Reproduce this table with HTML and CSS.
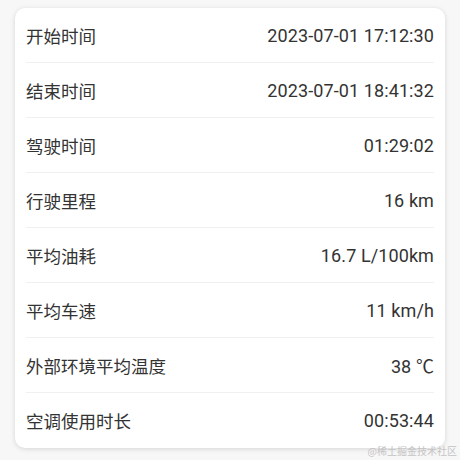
FILE: index.html
```html
<!DOCTYPE html>
<html lang="zh">
<head>
<meta charset="utf-8">
<link rel="stylesheet" href="styles.css">
</head>
<body>
<div class="card">
  <div class="row"><span class="label">开始时间</span><span class="value">2023-07-01 17:12:30</span></div>
  <div class="row"><span class="label">结束时间</span><span class="value">2023-07-01 18:41:32</span></div>
  <div class="row"><span class="label">驾驶时间</span><span class="value">01:29:02</span></div>
  <div class="row"><span class="label">行驶里程</span><span class="value">16 km</span></div>
  <div class="row"><span class="label">平均油耗</span><span class="value">16.7 L/100km</span></div>
  <div class="row"><span class="label">平均车速</span><span class="value">11 km/h</span></div>
  <div class="row"><span class="label">外部环境平均温度</span><span class="value">38 ℃</span></div>
  <div class="row"><span class="label">空调使用时长</span><span class="value">00:53:44</span></div>
</div>
<div class="watermark">@稀土掘金技术社区</div>
</body>
</html>
```
FILE: styles.css
```css
html, body {
  margin: 0;
  background: #f7f7f7;
}
body {
  padding: 8px 15px 0 15px;
  width: 460px;
  height: 460px;
  box-sizing: border-box;
  position: relative;
  font-family: Roboto, "Noto Sans CJK SC", sans-serif;
  color: #333;
}
.card {
  background: #fff;
  border-radius: 10px;
  box-shadow: 0 1px 5px rgba(0, 0, 0, 0.14);
  padding: 0 11px;
}
.row {
  height: 55px;
  box-sizing: border-box;
  display: flex;
  align-items: center;
  justify-content: space-between;
  border-bottom: 1px solid #f0f0f0;
}
.row:last-child {
  border-bottom: none;
}
.label {
  font-size: 17.5px;
}
.value {
  font-size: 18px;
  letter-spacing: 0.1px;
}
.watermark {
  position: absolute;
  right: 3px;
  bottom: 2px;
  font-size: 10px;
  color: #c4c4c4;
  font-family: "Noto Sans CJK SC", sans-serif;
}
```
